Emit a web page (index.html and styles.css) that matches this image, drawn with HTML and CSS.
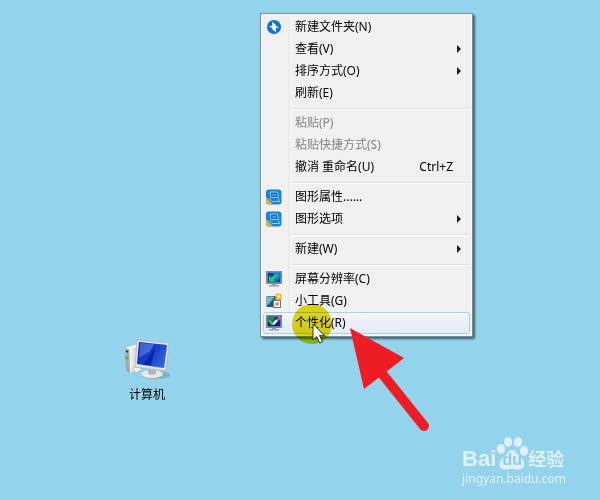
FILE: index.html
```html
<!DOCTYPE html>
<html lang="zh-CN">
<head>
  <meta charset="UTF-8">
  <meta name="viewport" content="width=device-width, initial-scale=1.0">
  <title>桌面</title>
  <link rel="stylesheet" href="styles.css">
</head>
<body>
  <main class="desktop">
    <a class="shortcut" href="#">
      <svg class="shortcut-icon" width="48" height="42" viewBox="0 0 48 42" aria-hidden="true">
        <defs>
          <linearGradient id="screen" x1="0" y1="0.2" x2="1" y2="0.8">
            <stop offset="0" stop-color="#0a22a8"/>
            <stop offset="0.4" stop-color="#1740d0"/>
            <stop offset="0.5" stop-color="#0620a4"/>
            <stop offset="1" stop-color="#2460e4"/>
          </linearGradient>
          <linearGradient id="metal" x1="0" y1="0" x2="1" y2="0">
            <stop offset="0" stop-color="#a9adb0"/>
            <stop offset="0.4" stop-color="#f0f0f0"/>
            <stop offset="1" stop-color="#c6cacc"/>
          </linearGradient>
        </defs>
        <path d="M2 10 L12 7 L16 8 L16 30 L7 35 L3 33 Z" fill="url(#metal)"/>
        <path d="M2 10 L6 11 L7 35 L3 33 Z" fill="#a5aaac"/>
        <path d="M2 10 L12 7 L16 8 L6 11 Z" fill="#fafafa"/>
        <path d="M3 13 L5 14" stroke="#333" stroke-width="1.5"/>
        <circle cx="4" cy="20" r="1.6" fill="#55bd28"/>
        <path d="M9 30 L14 29 L20 31 L13 35 Z" fill="#eef0f0" stroke="#a1a8ac" stroke-width="0.5"/>
        <ellipse cx="34" cy="37" rx="13" ry="4" fill="#568798" opacity="0.4"/>
        <ellipse cx="29" cy="37" rx="11" ry="4" fill="#a9b0b4"/>
        <ellipse cx="29" cy="36" rx="11" ry="4" fill="#e5e7e8"/>
        <path d="M24 30 L33 32 L33 36 L26 37 Z" fill="#b0b6b9"/>
        <path d="M14 2 L46 5 L43 33 L12 29 Z" fill="#e1e3e4" stroke="#a8adb0" stroke-width="0.6"/>
        <path d="M16 4 L44 7 L41 30 L14 26 Z" fill="url(#screen)"/>
        <path d="M17 5 L31 6 L27 13 L16 20 Z" fill="#7fa4f2" opacity="0.45"/>
        <path d="M33 6 L44 7 L41 30 L28 28 Z" fill="#4c8cf8" opacity="0.3"/>
      </svg>
      <span class="shortcut-name">计算机</span>
    </a>

    <menu class="context-menu">
      <li><button class="item">
        <svg class="icon" width="16" height="16" viewBox="0 0 16 16" aria-hidden="true">
          <circle cx="8" cy="8" r="7" fill="#0a74d2"/>
          <path d="M6 2.8 L10 6 L9.4 7 L13 8.2 L9.7 9.4 L10 13.2 L6 10 L6.6 9 L3 7.8 L6.3 6.6 Z" fill="#fff"/>
        </svg>
        <span class="label">新建文件夹(N)</span></button></li>
      <li><button class="item"><span class="label">查看(V)</span><span class="arrow"></span></button></li>
      <li><button class="item"><span class="label">排序方式(O)</span><span class="arrow"></span></button></li>
      <li><button class="item"><span class="label">刷新(E)</span></button></li>
      <li class="separator"></li>
      <li><button class="item" disabled><span class="label">粘贴(P)</span></button></li>
      <li><button class="item" disabled><span class="label">粘贴快捷方式(S)</span></button></li>
      <li><button class="item"><span class="label">撤消 重命名(U)</span><span class="key">Ctrl+Z</span></button></li>
      <li class="separator"></li>
      <li><button class="item">
        <svg class="icon" width="16" height="16" viewBox="0 0 16 16" aria-hidden="true">
          <rect x="0" y="0.5" width="15.5" height="15" rx="3" fill="#1584d4"/>
          <path d="M0 8 L7 15.5 H3 Q0 15.5 0 12.5 Z" fill="#d9b148"/>
          <path d="M4 3 H11.5 L12.5 8.5 H5 Z" fill="#0f6fc4" stroke="#8fd0f4"/>
          <path d="M3 9 L6 12.5 H13.5 L12.5 9.5 M6.5 6 H10" fill="none" stroke="#8fd0f4"/>
        </svg>
        <span class="label">图形属性......</span></button></li>
      <li><button class="item">
        <svg class="icon" width="16" height="16" viewBox="0 0 16 16" aria-hidden="true">
          <rect x="0" y="0.5" width="15.5" height="15" rx="3" fill="#1584d4"/>
          <path d="M0 8 L7 15.5 H3 Q0 15.5 0 12.5 Z" fill="#d9b148"/>
          <path d="M4 3 H11.5 L12.5 8.5 H5 Z" fill="#0f6fc4" stroke="#8fd0f4"/>
          <path d="M3 9 L6 12.5 H13.5 L12.5 9.5 M6.5 6 H10" fill="none" stroke="#8fd0f4"/>
        </svg>
        <span class="label">图形选项</span><span class="arrow"></span></button></li>
      <li class="separator"></li>
      <li><button class="item"><span class="label">新建(W)</span><span class="arrow"></span></button></li>
      <li class="separator"></li>
      <li><button class="item">
        <svg class="icon" width="16" height="16" viewBox="0 0 16 16" aria-hidden="true">
          <rect x="0.5" y="0.5" width="15" height="12" fill="#b9c3c8" stroke="#7f8b92"/>
          <rect x="1.5" y="1.5" width="13" height="10" fill="#0a3fae"/>
          <path d="M8 1.5 H14.5 V6 L9 11.5 H5 Z" fill="#1281d2"/>
          <path d="M3 10.5 V4.5 L5 6.5 L11 3 L12 4.5 L7 8.5 L9 10.5 Z" fill="#31cc43"/>
          <path d="M6 13 H10 V14 H13 V15.5 H3 V14 H6 Z" fill="#98a2a8"/>
        </svg>
        <span class="label">屏幕分辨率(C)</span></button></li>
      <li><button class="item">
        <svg class="icon" width="16" height="16" viewBox="0 0 16 16" aria-hidden="true">
          <rect x="0.5" y="3" width="10" height="11" rx="1" fill="#205b7d"/>
          <path d="M1 3.5 H9 L2 12 H1 Z" fill="#7cb3cd"/>
          <rect x="9.5" y="0.5" width="6" height="7" rx="1" fill="#f5b32d"/>
          <rect x="11" y="2" width="3" height="3" fill="#ffe28d"/>
          <rect x="7.5" y="7.5" width="7" height="7" fill="#f5f5f5" stroke="#5c7b8c"/>
          <rect x="9.5" y="9.5" width="3" height="3" fill="#df7a31"/>
        </svg>
        <span class="label">小工具(G)</span></button></li>
      <li><button class="item hot">
        <svg class="icon" width="16" height="16" viewBox="0 0 16 16" aria-hidden="true">
          <rect x="0.5" y="0.5" width="15" height="12" fill="#b9c3c8" stroke="#7f8b92"/>
          <rect x="1.5" y="1.5" width="13" height="10" fill="#101f93"/>
          <path d="M1.5 1.5 H10 L5 8 L1.5 6 Z" fill="#168a51"/>
          <path d="M3 5.5 L6 9 L10 5" fill="none" stroke="#36ce54" stroke-width="2"/>
          <path d="M7 9.5 L14.5 2" stroke="#fff" stroke-width="2"/>
          <path d="M11 5.5 L15.5 1" stroke="#c94242" stroke-width="1.5"/>
          <path d="M6 13 H10 V14 H13 V15.5 H3 V14 H6 Z" fill="#98a2a8"/>
        </svg>
        <span class="label">个性化(R)</span></button></li>
    </menu>

    <div class="click-spot"></div>
    <svg class="cursor" width="14" height="22" viewBox="0 0 14 22" aria-hidden="true">
      <path d="M1 1 V17 L4.8 13.6 L7.7 20 L10.4 18.8 L7.6 12.6 H12.6 Z" fill="#fff" stroke="#333" stroke-width="1"/>
    </svg>

    <svg class="pointer" width="82" height="106" viewBox="0 0 82 106" aria-hidden="true">
      <path d="M34 48 L74 98" stroke="#ee1c25" stroke-width="10" stroke-linecap="round"/>
      <path d="M0 0 L54 30 L14 61 Z" fill="#ee1c25"/>
    </svg>

    <div class="watermark">
      <div class="brand">
        <span class="bai">Bai</span>
        <span class="paw">
          <svg width="32" height="34" viewBox="0 0 32 34" aria-hidden="true">
            <ellipse cx="5" cy="13" rx="4" ry="5"/>
            <ellipse cx="12" cy="6" rx="4" ry="5"/>
            <ellipse cx="22" cy="6" rx="4" ry="5" transform="rotate(10 22 6)"/>
            <ellipse cx="28" cy="15" rx="4" ry="5"/>
            <path d="M16 14 C20 14 21 18 24 21 C28 24 29 27 28 30 C26 35 21 33 16 33 C11 33 7 35 4 31 C2 27 5 23 8 21 C11 18 12 14 16 14 Z"/>
          </svg>
          <span class="du">du</span>
        </span>
        <span class="jingyan">经验</span>
      </div>
      <div class="site">jingyan.baidu.com</div>
    </div>
  </main>
</body>
</html>
```
FILE: styles.css
```css
body {
  margin: 0;
  font-family: "Noto Sans", "Noto Sans CJK SC", sans-serif;
  font-size: 12px;
  color: #000;
}

.desktop {
  position: relative;
  min-height: 100vh;
  overflow: hidden;
  background: #93d3ec;
}

/* desktop shortcut */
.shortcut {
  position: absolute;
  left: 112px;
  top: 338px;
  width: 70px;
  display: flex;
  flex-direction: column;
  align-items: center;
  gap: 6px;
  color: #000;
  text-decoration: none;
}

.shortcut-name {
  line-height: 18px;
}

/* context menu */
.context-menu {
  position: absolute;
  left: 260px;
  top: 13px;
  box-sizing: border-box;
  width: 213px;
  margin: 0;
  padding: 2px;
  list-style: none;
  border: 1px solid #7f8c92;
  background: linear-gradient(to right, #f0f0f0 28px, #e0e2e3 28px, #e0e2e3 29px, #fff 29px, #fff 30px, #f0f0f0 30px);
  box-shadow: inset 0 0 0 1px #f8f8f8, 2px 2px 2px rgba(20, 40, 50, 0.65);
}

.item {
  display: grid;
  grid-template-columns: 30px 1fr auto;
  align-items: center;
  box-sizing: border-box;
  width: 100%;
  height: 22px;
  margin: 0;
  padding: 0 8px 0 1px;
  border: 1px solid transparent;
  border-radius: 3px;
  background: none;
  font: inherit;
  line-height: 18px;
  color: #000;
  text-align: left;
}

.item:disabled {
  color: #838383;
}

.item.hot {
  border-color: #aecfe8;
  background: linear-gradient(rgba(244, 247, 252, 0.8), rgba(224, 233, 245, 0.8));
}

.icon {
  grid-column: 1;
  margin-left: 1px;
}

.label {
  grid-column: 2;
  white-space: nowrap;
}

.key {
  margin-right: 8px;
}

.arrow {
  border: 4px solid transparent;
  border-left-color: #1c1c1c;
  border-right: 0;
}

.separator {
  height: 1px;
  margin: 4px 1px 2px 28px;
  background: #dedfe0;
  border-bottom: 1px solid #fff;
}

/* mouse click highlight */
.click-spot {
  position: absolute;
  left: 292px;
  top: 304px;
  width: 40px;
  height: 40px;
  border-radius: 50%;
  background: #e6dc18;
  mix-blend-mode: multiply;
}

.cursor {
  position: absolute;
  left: 312px;
  top: 323px;
}

.pointer {
  position: absolute;
  left: 350px;
  top: 328px;
}

/* watermark */
.watermark {
  position: absolute;
  right: 34px;
  bottom: 12px;
  color: #def1fa;
}

.brand {
  display: flex;
  align-items: flex-end;
}

.bai {
  font-family: "Liberation Sans", sans-serif;
  font-size: 22px;
  font-weight: bold;
  line-height: 22px;
}

.paw {
  position: relative;
  flex: none;
  width: 32px;
  height: 34px;
  fill: #def1fa;
}

.du {
  position: absolute;
  left: 0;
  right: 0;
  bottom: 0;
  font-family: "Liberation Sans", sans-serif;
  font-size: 16px;
  font-weight: bold;
  line-height: 20px;
  text-align: center;
  color: #8fcbe4;
}

.jingyan {
  font-size: 18px;
  font-weight: bold;
  line-height: 22px;
}

.site {
  font-size: 12px;
  line-height: 18px;
}
```
